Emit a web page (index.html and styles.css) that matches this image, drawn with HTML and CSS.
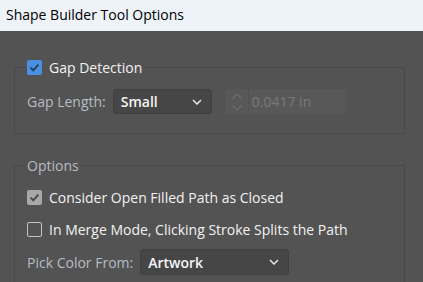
FILE: index.html
```html
<!DOCTYPE html>
<html lang="en">
<head>
  <meta charset="UTF-8" />
  <title>Shape Builder Tool Options</title>
  <link rel="stylesheet" href="styles.css">
</head>
<body>
  <div class="title-bar">Shape Builder Tool Options</div>

  <div class="panel">
    <!-- gap detection group -->
    <fieldset class="group">
      <legend class="legend">
        <span class="check check-on">
          <svg viewBox="0 0 15 15" width="15" height="15"><path d="M3.6 7.6 L6.3 10.3 L11.4 4.6" fill="none" stroke="#26405f" stroke-width="2"/></svg>
        </span>
        <span class="legend-text">Gap Detection</span>
      </legend>
      <div class="row">
        <span class="label">Gap Length:</span>
        <div class="select select-small">
          <span class="select-text">Small</span>
          <svg class="chevron" viewBox="0 0 10 6" width="10" height="6"><path d="M1 1 L5 5 L9 1" fill="none" stroke="#e6e6e6" stroke-width="1.5"/></svg>
        </div>
        <div class="spinner">
          <svg class="spin-arrows" viewBox="0 0 12 20" width="12" height="20"><path d="M1.5 6.5 L6 2 L10.5 6.5 M1.5 13.5 L6 18 L10.5 13.5" fill="none" stroke="#6e6e6e" stroke-width="1.2"/></svg>
          <span class="spin-sep"></span>
          <span class="spin-text">0.0417 in</span>
        </div>
      </div>
    </fieldset>

    <!-- options group -->
    <fieldset class="group group-options">
      <legend class="legend"><span class="legend-label">Options</span></legend>
      <div class="check-row">
        <span class="check check-grey">
          <svg viewBox="0 0 15 15" width="15" height="15"><path d="M3.6 7.6 L6.3 10.3 L11.4 4.6" fill="none" stroke="#4a4a4a" stroke-width="2"/></svg>
        </span>
        <span class="check-text">Consider Open Filled Path as Closed</span>
      </div>
      <div class="check-row">
        <span class="check check-off"></span>
        <span class="check-text">In Merge Mode, Clicking Stroke Splits the Path</span>
      </div>
      <div class="row row-pick">
        <span class="label">Pick Color From:</span>
        <div class="select select-art">
          <span class="select-text">Artwork</span>
          <svg class="chevron" viewBox="0 0 10 6" width="10" height="6"><path d="M1 1 L5 5 L9 1" fill="none" stroke="#e6e6e6" stroke-width="1.5"/></svg>
        </div>
      </div>
    </fieldset>
  </div>
</body>
</html>
```

FILE: styles.css
```css
* {
  margin: 0;
  padding: 0;
  box-sizing: border-box;
}

body {
  width: 423px;
  height: 282px;
  overflow: hidden;
  font-family: "Open Sans", "Noto Sans", sans-serif;
  background-color: #535353;
}

.title-bar {
  height: 31px;
  padding-left: 6px;
  line-height: 30px;
  font-size: 14px;
  color: #000;
  background-color: #eef2f9;
}

.panel {
  padding: 26px 18px 0 14px;
}

.group {
  min-width: 0;
  border: 1px solid #494949;
  border-radius: 2px;
  padding: 0 12px;
  height: 77px;
}

.group-options {
  margin-top: 21px;
  height: 140px;
}

.legend {
  display: flex;
  align-items: center;
  padding: 0 2px;
  margin-left: -2px;
  height: 20px;
}

.legend-text {
  margin-left: 7px;
  font-size: 14px;
  color: #f2f2f2;
}

.legend-label {
  font-size: 14px;
  color: #b7bcc2;
}

.check {
  display: block;
  width: 15px;
  height: 15px;
  border-radius: 2px;
  flex-shrink: 0;
}

.check svg {
  display: block;
}

.check-on {
  background-color: #4b8fe2;
}

.check-grey {
  background-color: #a8a8a8;
}

.check-off {
  border: 1.5px solid #c4c4c4;
}

.row {
  display: flex;
  align-items: center;
  margin-top: 12px;
}

.label {
  font-size: 14px;
  color: #b7bcc2;
  margin-right: 7px;
}

.select {
  display: flex;
  align-items: center;
  justify-content: space-between;
  height: 25px;
  padding: 0 9px 0 7px;
  background-color: #464646;
  border: 1px solid #3f3f3f;
  border-radius: 3px;
}

.select-small {
  width: 99px;
}

.select-art {
  width: 149px;
  height: 26px;
}

.select-text {
  font-size: 14px;
  font-weight: 600;
  color: #f5f5f5;
}

.chevron {
  display: block;
}

.spinner {
  display: flex;
  align-items: center;
  width: 121px;
  height: 25px;
  margin-left: 13px;
  background-color: #585858;
  border-radius: 2px;
}

.spin-arrows {
  display: block;
  margin-left: 6px;
}

.spin-sep {
  width: 1px;
  height: 25px;
  margin-left: 5px;
  background-color: #525252;
}

.spin-text {
  margin-left: 3px;
  font-size: 14px;
  color: #7a7a7a;
}

.check-row {
  display: flex;
  align-items: center;
  gap: 7px;
  margin-top: 12px;
  height: 20px;
}

.check-row + .check-row {
  margin-top: 12px;
}

.check-text {
  font-size: 14px;
  color: #f2f2f2;
}

.row-pick {
  margin-top: 10px;
}
```
